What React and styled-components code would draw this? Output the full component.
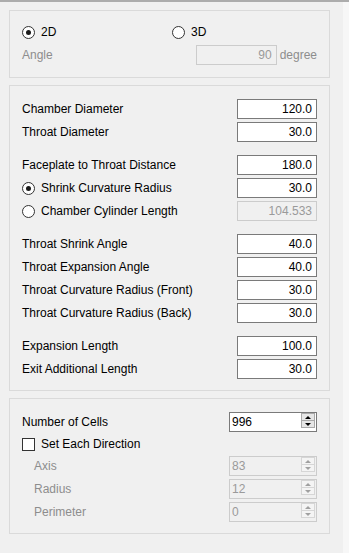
import styled, { createGlobalStyle } from 'styled-components'

const GlobalStyle = createGlobalStyle`
    body {
        margin: 0;
        background: #f0f0f0;
        font-family: "Liberation Sans", Arial, sans-serif;
        font-size: 12px;
        color: #000;
    }
`

const Page = styled('div')`
    display: flex;
    min-height: 553px;
    border-top: 2px solid #acacac;
    box-sizing: border-box;
`
const Panel = styled('div')`
    width: 343px;
    box-sizing: border-box;
    padding: 8px 0 0 9px;
    display: flex;
    flex-direction: column;
    gap: 7px;
`
const Strip = styled('div')`
    flex: 1;
    background: #f7f7f7;
`
const Group = styled('section')`
    width: 321px;
    box-sizing: border-box;
    border: 1px solid #dadada;
    padding: ${(p) => p.$pad};
    display: flex;
    flex-direction: column;
    gap: 3px;
`
const Row = styled('div')`
    display: flex;
    align-items: center;
    height: ${(p) => (p.$short ? '18px' : '20px')};
    margin-top: ${(p) => (p.$spaced ? '10px' : '0')};
`
const RadioRow = styled('div')`
    display: grid;
    grid-template-columns: 150px 1fr;
    align-items: center;
    height: 20px;
`
const Choice = styled('label')`
    display: flex;
    align-items: center;
    flex: 1;
    white-space: nowrap;
`
const Label = styled('span')`
    flex: 1;
    white-space: nowrap;
    color: ${(p) => (p.$disabled ? '#8d8d8d' : '#000')};
    padding-left: ${(p) => (p.$indent ? '12px' : '0')};
`
const RadioCircle = styled('span')`
    width: 13px;
    height: 13px;
    box-sizing: border-box;
    border: 1px solid #333;
    border-radius: 50%;
    background: #fff;
    margin-right: 6px;
    flex-shrink: 0;
    display: flex;
    align-items: center;
    justify-content: center;
    &::after {
        content: '';
        display: ${(p) => (p.$checked ? 'block' : 'none')};
        width: 5px;
        height: 5px;
        border-radius: 50%;
        background: #1a1a1a;
    }
`
const CheckBox = styled('span')`
    width: 13px;
    height: 13px;
    box-sizing: border-box;
    border: 1px solid #333;
    background: #fff;
    margin-right: 6px;
    flex-shrink: 0;
`
const NumberField = styled('input')`
    width: ${(p) => p.$w || '80px'};
    height: 20px;
    box-sizing: border-box;
    border: 1px solid ${(p) => (p.disabled ? '#cccccc' : '#7a7a7a')};
    background: ${(p) => (p.disabled ? '#f0f0f0' : '#fff')};
    color: ${(p) => (p.disabled ? '#9a9a9a' : '#000')};
    font: inherit;
    text-align: right;
    padding: 0 4px;
    margin: 0;
    outline: none;
`
const Unit = styled('span')`
    margin-left: 3px;
    color: #8d8d8d;
`
const Spinner = styled('div')`
    display: flex;
    width: 88px;
    height: 20px;
    box-sizing: border-box;
    border: 1px solid ${(p) => (p.$disabled ? '#cccccc' : '#7a7a7a')};
    background: ${(p) => (p.$disabled ? '#f0f0f0' : '#fff')};
`
const SpinInput = styled('input')`
    flex: 1;
    min-width: 0;
    border: none;
    background: transparent;
    font: inherit;
    color: ${(p) => (p.disabled ? '#9a9a9a' : '#000')};
    padding: 0 2px;
    margin: 0;
    outline: none;
`
const Arrows = styled('div')`
    display: flex;
    flex-direction: column;
    width: 14px;
    height: 15px;
    margin-right: 1px;
`
const ArrowButton = styled('span')`
    flex: 1;
    display: flex;
    align-items: center;
    justify-content: center;
    box-sizing: border-box;
    border: 1px solid ${(p) => (p.$disabled ? '#d6d6d6' : '#a9a9a9')};
    border-top-width: ${(p) => (p.$down ? '0' : '1px')};
    background: ${(p) => (p.$disabled ? '#f4f4f4' : '#e6e6e6')};
    &::after {
        content: '';
        border-left: 3px solid transparent;
        border-right: 3px solid transparent;
        ${(p) => (p.$down ? 'border-top' : 'border-bottom')}: 3px solid
            ${(p) => (p.$disabled ? '#a0a0a0' : '#000')};
    }
`

const geometry = [
    [
        { label: 'Chamber Diameter', value: '120.0' },
        { label: 'Throat Diameter', value: '30.0' },
    ],
    [
        { label: 'Faceplate to Throat Distance', value: '180.0' },
        { label: 'Shrink Curvature Radius', value: '30.0', radio: true, checked: true },
        { label: 'Chamber Cylinder Length', value: '104.533', radio: true, disabled: true },
    ],
    [
        { label: 'Throat Shrink Angle', value: '40.0' },
        { label: 'Throat Expansion Angle', value: '40.0' },
        { label: 'Throat Curvature Radius (Front)', value: '30.0' },
        { label: 'Throat Curvature Radius (Back)', value: '30.0' },
    ],
    [
        { label: 'Expansion Length', value: '100.0' },
        { label: 'Exit Additional Length', value: '30.0' },
    ],
]

const directions = [
    { label: 'Axis', value: '83' },
    { label: 'Radius', value: '12' },
    { label: 'Perimeter', value: '0' },
]

function SpinBox({ value, disabled }) {
    return (
        <Spinner $disabled={disabled}>
            <SpinInput value={value} disabled={disabled} readOnly />
            <Arrows>
                <ArrowButton $disabled={disabled} />
                <ArrowButton $disabled={disabled} $down />
            </Arrows>
        </Spinner>
    )
}

function App() {
    return (
        <Page>
            <GlobalStyle />
            <Panel>
                <Group $pad="11px 12px 12px 12px">
                    <RadioRow>
                        <Choice>
                            <RadioCircle $checked />
                            2D
                        </Choice>
                        <Choice>
                            <RadioCircle />
                            3D
                        </Choice>
                    </RadioRow>
                    <Row>
                        <Label $disabled>Angle</Label>
                        <NumberField $w="81px" value="90" disabled readOnly />
                        <Unit>degree</Unit>
                    </Row>
                </Group>

                <Group $pad="13px 12px 11px 12px">
                    {geometry.map((section, si) =>
                        section.map((item, i) => (
                            <Row key={item.label} $spaced={si > 0 && i === 0}>
                                {item.radio ? (
                                    <Choice>
                                        <RadioCircle $checked={item.checked} />
                                        {item.label}
                                    </Choice>
                                ) : (
                                    <Label>{item.label}</Label>
                                )}
                                <NumberField
                                    value={item.value}
                                    disabled={item.disabled}
                                    readOnly
                                />
                            </Row>
                        ))
                    )}
                </Group>

                <Group $pad="13px 12px 11px 12px">
                    <Row>
                        <Label>Number of Cells</Label>
                        <SpinBox value="996" />
                    </Row>
                    <Row $short>
                        <Choice>
                            <CheckBox />
                            Set Each Direction
                        </Choice>
                    </Row>
                    {directions.map((d) => (
                        <Row key={d.label}>
                            <Label $disabled $indent>
                                {d.label}
                            </Label>
                            <SpinBox value={d.value} disabled />
                        </Row>
                    ))}
                </Group>
            </Panel>
            <Strip />
        </Page>
    )
}

export default App
